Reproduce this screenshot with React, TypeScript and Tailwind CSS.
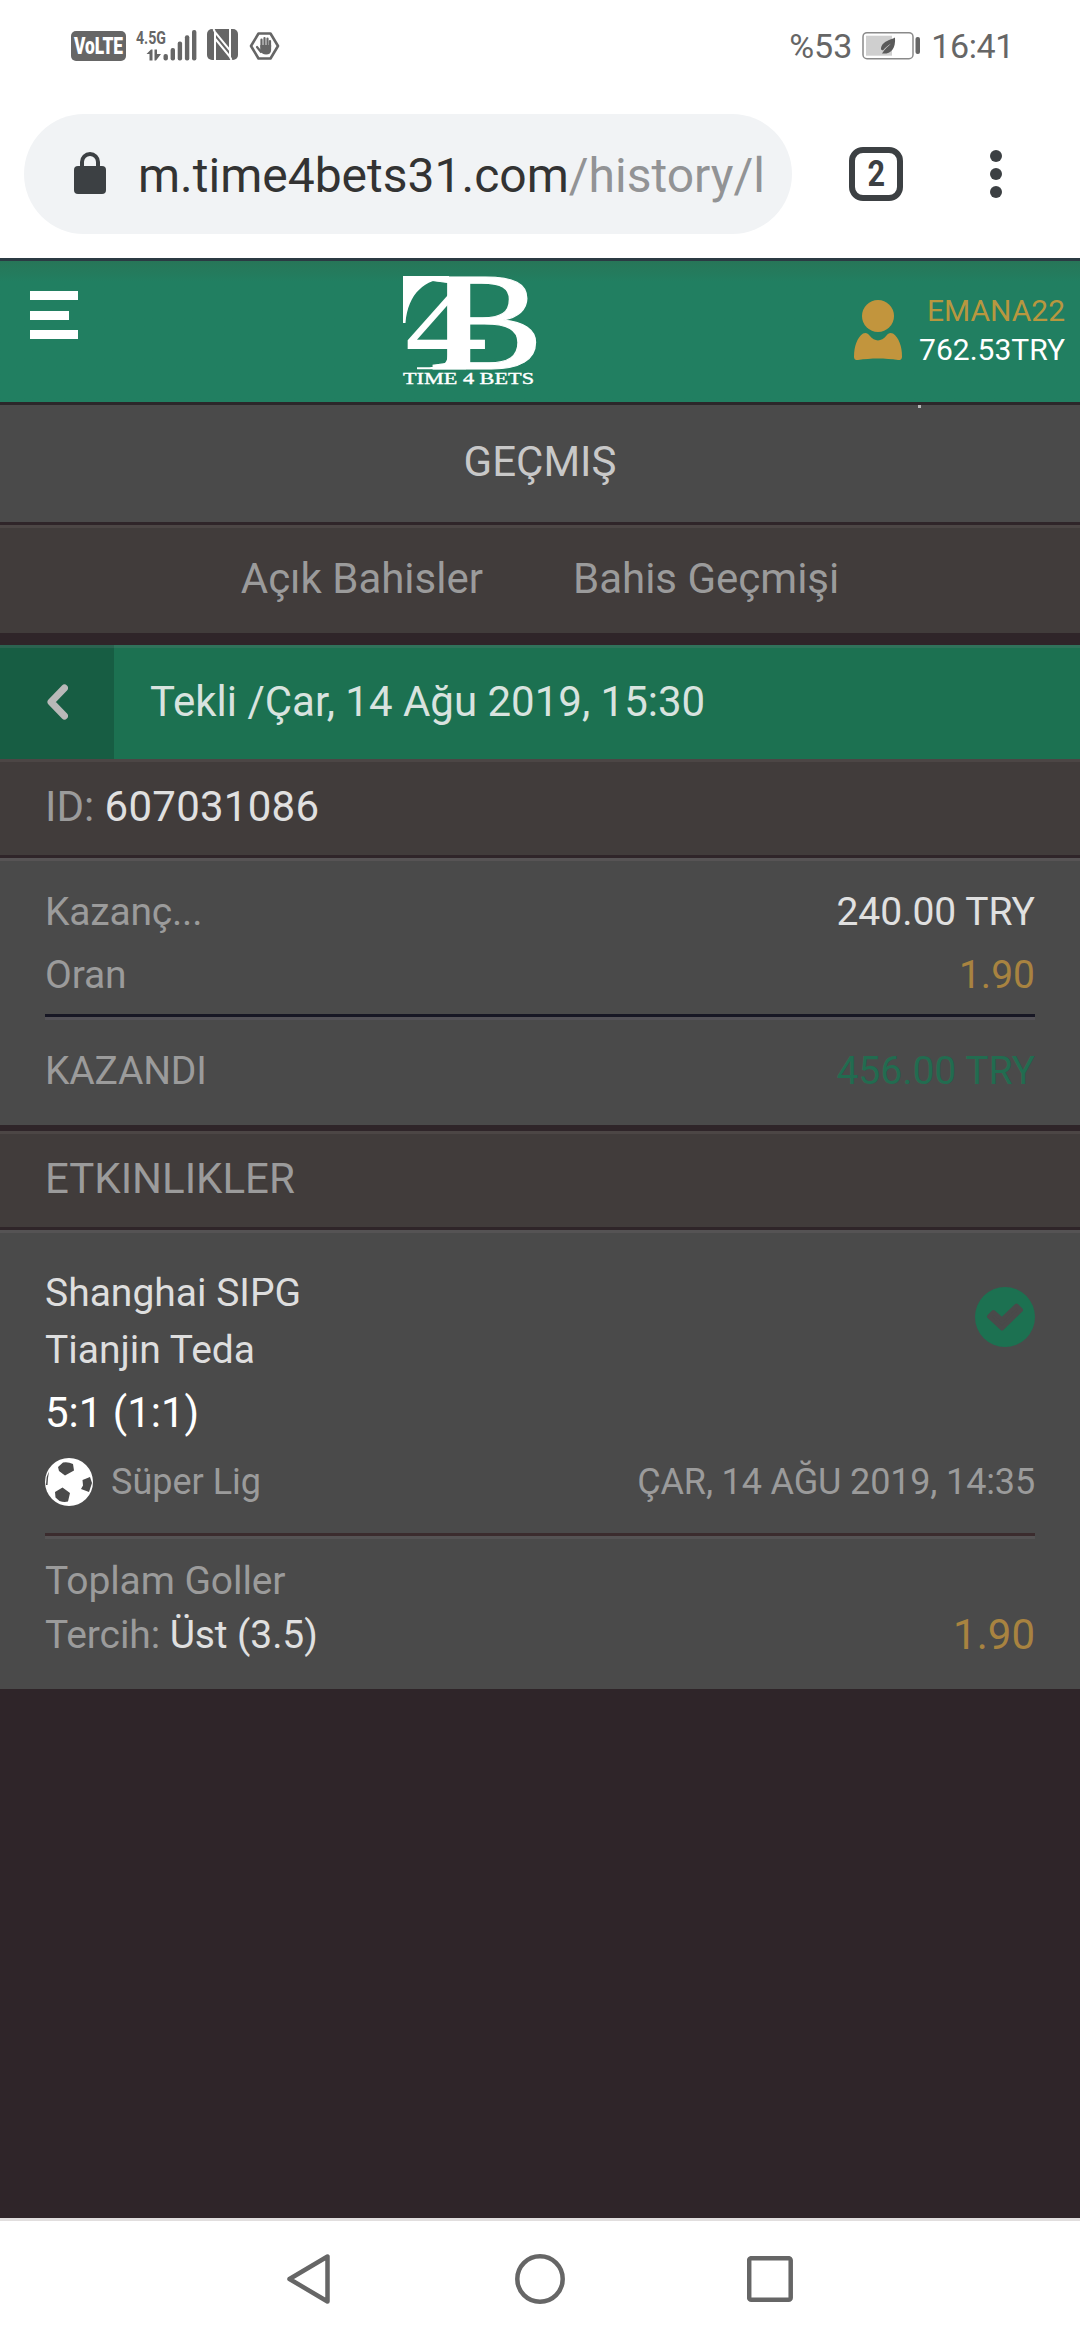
import type { ReactNode } from 'react';

const StatusBar = () => (
  <div className="flex h-[90px] items-start justify-between pl-[71px] pr-[66px] text-[#666]">
    <div className="flex items-start pt-[29px]">
      <div className="mt-0.5 flex h-[30px] w-[55px] items-center justify-center rounded-[5px] bg-[#666]">
        <svg viewBox="0 0 55 30" className="h-[30px] w-[55px] overflow-visible">
          <text x="3" y="23" textLength="49" lengthAdjust="spacingAndGlyphs" fontSize="23" fontWeight="900" fill="#fff">
            VoLTE
          </text>
        </svg>
      </div>
      {/* Mobile signal */}
      <svg viewBox="0 0 62 33" className="ml-[10px] h-[33px] w-[62px] overflow-visible" fill="#666">
        <text x="0" y="14.5" textLength="30" lengthAdjust="spacingAndGlyphs" fontSize="19" fontWeight="700">
          4.5G
        </text>
        <path d="M10.500 25l4.500-4.500h1.500V31.500h-3V25zM18.500 20.500h2.500v4.500h4l-5 6.500h-1.500z" />
        <rect x="27.500" y="25" width="4.400" height="6.500" rx="2" />
        <rect x="34.600" y="19" width="4.400" height="12.500" rx="2" />
        <rect x="41.700" y="12.500" width="4.400" height="19" rx="2" />
        <rect x="48.900" y="6.300" width="4.400" height="25.200" rx="2" />
        <rect x="56" y="1" width="4.400" height="30.500" rx="2" />
      </svg>
      {/* NFC */}
      <svg viewBox="0 0 31 31" className="ml-[9px] h-[31px] w-[31px]">
        <rect width="31" height="31" rx="5" fill="#666" />
        <path d="M8 31V3L23 21.500V7M6.500 0L8 3M23 7.500V0M23 21.500v6.500L8 9.500M24.500 31L23 28" fill="none" stroke="#fff" strokeWidth="2" />
      </svg>
      {/* Blocker */}
      <svg viewBox="0 0 31 28" className="ml-[11px] mt-[3px] h-7 w-[31px]">
        <path d="M9.500 1.500h12L29 14l-7.500 12.500h-12L2 14z" fill="none" stroke="#666" strokeWidth="2.600" strokeLinejoin="round" />
        <path d="M12.500 15V7.500M15.500 14V6M18.500 14V6.500M21 15V9M8 15l4 5" stroke="#666" strokeWidth="2.200" strokeLinecap="round" />
        <path d="M11.400 13h10.700v5c0 3-2 4.500-5 4.500s-4-1-6-3.500z" fill="#666" />
      </svg>
    </div>
    <div className="flex items-start">
      <span className="mt-[23px] text-[34px] leading-[46px]">%53</span>
      <svg viewBox="0 0 59 29" className="ml-[10px] mt-[31px] h-[29px] w-[59px]">
        <rect x="1" y="1.700" width="50" height="26" rx="4" fill="none" stroke="#8a8a8a" strokeWidth="1.500" />
        <rect x="4" y="4.700" width="26" height="20" fill="#cfcfcf" />
        <rect x="53.500" y="6" width="4.500" height="17" rx="2" fill="#666" />
        <path d="M33 6.500c-2 2-14 3-14 12l2 1c2-3 5-5 8-7-3 3-6 5-9 10 8 1 14-4 13-16z" fill="#5a5a5a" />
      </svg>
      <span className="ml-[10px] mt-[23px] text-[34px] leading-[46px] tracking-[-0.4px]">16:41</span>
    </div>
  </div>
);

const AddressBar = () => (
  <div className="flex h-[168px] items-start pl-6 pt-6">
    <div className="flex h-[120px] w-[768px] items-center rounded-full bg-[#f1f3f5] pl-[50px] pr-[20px]">
      <svg viewBox="0 0 32 42" className="mb-0.5 h-[42px] w-8 shrink-0">
        <rect y="14" width="32" height="28" rx="4" fill="#3c4043" />
        <path d="M8 16v-6a8 8 0 0 1 16 0v6" fill="none" stroke="#3c4043" strokeWidth="4" />
      </svg>
      <div className="ml-8 mt-[3px] flex-1 whitespace-nowrap text-[48px] leading-[60px] text-[#333]">
        m.time4bets31.com<span className="text-[#929395]">/history/l</span>
      </div>
    </div>
    <div className="ml-[57px] mt-[33px] flex h-[54px] w-[54px] items-center justify-center rounded-[14px] border-[6px] border-[#3c4043]">
      <span className="scale-x-[0.85] text-[36px] font-bold leading-[42px] text-[#3c4043]">2</span>
    </div>
    <div className="ml-[87px] mt-9 flex flex-col gap-1.5">
      <div className="h-3 w-3 rounded-full bg-[#3c4043]" />
      <div className="h-3 w-3 rounded-full bg-[#3c4043]" />
      <div className="h-3 w-3 rounded-full bg-[#3c4043]" />
    </div>
  </div>
);

const Logo = () => (
  <svg viewBox="0 0 136 110" className="h-[110px] w-[136px] overflow-visible" fill="#fff" fontFamily="'Liberation Serif', serif">
    <path d="M0 0h46v2C22 3 5 17 2.500 47H0z" />
    <path d="M14 91.300c20 0 30 1 31-13h18v15H14z" />
    <text transform="translate(1.500 91.500) scale(1.240 1)" fontSize="134">4</text>
    <text transform="translate(25.200 93) scale(1.240 1)" fontSize="140" stroke="#fff" strokeWidth="1">B</text>
    <text x="0" y="107.500" textLength="131" lengthAdjust="spacingAndGlyphs" fontSize="17" stroke="#fff" strokeWidth="0.400">
      TIME 4 BETS
    </text>
  </svg>
);

const SiteHeader = () => (
  <header className="flex h-[147px] items-start justify-between border-b-[3px] border-t-[3px] border-b-[#2b272a] border-t-[#2b3a43] bg-linear-to-b from-[#277658] to-[#217f61] to-15% pl-[30px] pr-[15px]">
    <div className="mt-[30px] flex w-[146px] flex-col gap-[10.5px]">
      <div className="h-[9px] w-12 bg-white" />
      <div className="h-[9px] w-[39px] bg-white" />
      <div className="h-[9px] w-12 bg-white" />
    </div>
    <div className="ml-[227px] mt-[15px] flex-1">
      <Logo />
    </div>
    <div className="mt-10 flex items-start">
      <svg viewBox="0 0 48 62" className="mr-[17px] h-[62px] w-12 -translate-y-px" fill="#c2953d">
        <circle cx="24" cy="16" r="16" />
        <path d="M9 33.500c3-1.500 5 0 6.500 2C21 42 27 42 32.500 35.500c1.500-2 3.500-3.500 6.500-2 6 4.500 9 13 9 23 0 3-1.500 3.500-4 3.500-13-2-27-2-40 0-2.500 0-4-.5-4-3.500 0-10 3-18.500 9-23z" />
      </svg>
      <div className="-mt-[10px] text-right text-[30px] leading-[39px]">
        <div className="text-[#b8973f]">EMANA22</div>
        <div className="text-white">762.53TRY</div>
      </div>
    </div>
  </header>
);

const SectionBar = ({ children }: { children: ReactNode }) => (
  <div className="flex h-24 items-center border-t-[3px] border-[#4c4645] bg-[#413c3b] pb-1 pl-[45px] text-[42px] text-[#9b9b9b]">
    {children}
  </div>
);

const Row = ({ label, value, valueClass }: { label: string; value: string; valueClass: string }) => (
  <div className="flex h-[63px] items-center justify-between">
    <span className="tracking-[-0.2px]">{label}</span>
    <span className={valueClass}>{value}</span>
  </div>
);

const Football = () => (
  <svg viewBox="0 0 48 48" className="h-12 w-12">
    <circle cx="24" cy="24" r="24" fill="#fff" />
    <path
      d="M13 9l5-4.500q5-1 10 1.500l1 6.600-9 5-6-4.500zM10 34l7.500-4.500L25 35l-2 8.500q-4 1-8.500-.5l-4-3.500zM37.500 22l7.500-3 2 6-3 9-8-3 2-3.500zM4 13.500l-2.300 5.500L1 27h1.500l.5-7z"
      fill="#4a4a4a"
    />
  </svg>
);

const NavBar = () => (
  <div className="flex h-[122px] items-start justify-between border-t-[3px] border-[#e1dede] bg-white px-[287px] pt-[33px]">
    <svg viewBox="0 0 44 50" className="h-[50px] w-11">
      <path d="M40.500 2.500v45L2.500 25z" fill="none" stroke="#666" strokeWidth="4.500" strokeLinejoin="round" />
    </svg>
    <svg viewBox="0 0 50 50" className="ml-0.5 h-[50px] w-[50px]">
      <circle cx="25" cy="25" r="22.700" fill="none" stroke="#666" strokeWidth="4.500" />
    </svg>
    <svg viewBox="0 0 46 46" className="mt-0.5 h-[46px] w-[46px]">
      <rect x="2.200" y="2.200" width="41.500" height="41.500" rx="2" fill="none" stroke="#666" strokeWidth="4.500" />
    </svg>
  </div>
);

export default function App() {
  return (
    <div className="flex h-[2340px] w-[1080px] flex-col overflow-hidden bg-white font-['Roboto',sans-serif]">
      <StatusBar />
      <AddressBar />
      <SiteHeader />

      <main className="flex-1 bg-[#2f2529]">
        <div className="relative flex h-[117px] items-center justify-center bg-[#4a4a4a] pb-1 text-[42px] text-[#c8c8c8]">
          <div className="absolute left-[918px] top-0 h-[3px] w-[3px] bg-[#b5b5b5]" />
          GEÇMIŞ
        </div>

        <div className="mt-[3px] flex h-[108px] items-center justify-center gap-[90px] border-t-[3px] border-[#4c4645] bg-[#413c3b] pb-1 text-[42px] text-[#9b9b9b]">
          <span>Açık Bahisler</span>
          <span>Bahis Geçmişi</span>
        </div>

        <div className="mt-3 flex h-[114px]">
          <div className="flex w-[114px] items-center justify-center border-t-[3px] border-[#2b6350] bg-[#175d43]">
            <svg viewBox="0 0 21 36" className="mb-1 h-9 w-[21px]">
              <path d="M17.500 4L4 18l13.500 14" fill="none" stroke="#b9b9b9" strokeWidth="7" strokeLinecap="round" strokeLinejoin="round" />
            </svg>
          </div>
          <div className="flex flex-1 items-center border-t-[3px] border-[#30735b] bg-[#1c7151] pb-1 pl-9 text-[42px] text-[#d8e3df]">
            Tekli /Çar, 14 Ağu 2019, 15:30
          </div>
        </div>

        <SectionBar>
          <span>
            ID: <span className="tracking-[0.25px] text-[#e0e0e0]">607031086</span>
          </span>
        </SectionBar>

        {/* Bet summary */}
        <div className="mt-[3px] h-[267px] border-t-[3px] border-[#575455] bg-[#4a4a4a] px-[45px] text-[39px] text-[#9b9b9b]">
          <div className="pb-[7px] pt-5">
            <Row label="Kazanç..." value="240.00 TRY" valueClass="text-[#e0e0e0]" />
            <Row label="Oran" value="1.90" valueClass="text-[#a88340]" />
          </div>
          <div className="h-[3px] bg-[#171724]" />
          <div className="flex h-[108px] items-center justify-between border-t-[3px] border-[#545257] pb-0.5">
            <span className="tracking-[-0.2px]">KAZANDI</span>
            <span className="text-[#226c50]">456.00 TRY</span>
          </div>
        </div>

        <div className="mt-1.5">
          <SectionBar>ETKINLIKLER</SectionBar>
        </div>

        {/* Event */}
        <div className="mt-[3px] h-[459px] border-t-[3px] border-[#555354] bg-[#4a4a4a] px-[45px] pt-8 text-[39px] text-[#9b9b9b]">
          <div className="flex justify-between">
            <div className="leading-[57px] text-[#dedede]">
              <div>Shanghai SIPG</div>
              <div>Tianjin Teda</div>
              <div className="text-[42px] leading-[68px] text-white">5:1 (1:1)</div>
            </div>
            <svg viewBox="0 0 60 60" className="mt-[22px] h-[60px] w-[60px]">
              <circle cx="30" cy="30" r="30" fill="#1c7151" />
              <path
                d="M14 29.500l4.500-4.500 8.500 7.500 14.500-14 4.500 4.500-19 18.500z"
                fill="#4a4a4a"
                stroke="#4a4a4a"
                strokeWidth="4"
                strokeLinejoin="round"
              />
            </svg>
          </div>
          <div className="flex h-[70px] items-center text-[36px]">
            <Football />
            <span className="ml-[18px] flex-1">Süper Lig</span>
            <span className="tracking-[-0.15px]">ÇAR, 14 AĞU 2019, 14:35</span>
          </div>
          <div className="mt-4 h-[3px] bg-[#3b2c2e]" />
          <div className="border-t-[3px] border-[#555354] pt-[15px] leading-[54px] tracking-[-0.1px]">
            <div>Toplam Goller</div>
            <div className="flex justify-between">
              <span>
                Tercih: <span className="text-[#e0e0e0]">Üst (3.5)</span>
              </span>
              <span className="text-[42px] tracking-normal text-[#a88340]">1.90</span>
            </div>
          </div>
        </div>
      </main>

      <NavBar />
    </div>
  );
}
